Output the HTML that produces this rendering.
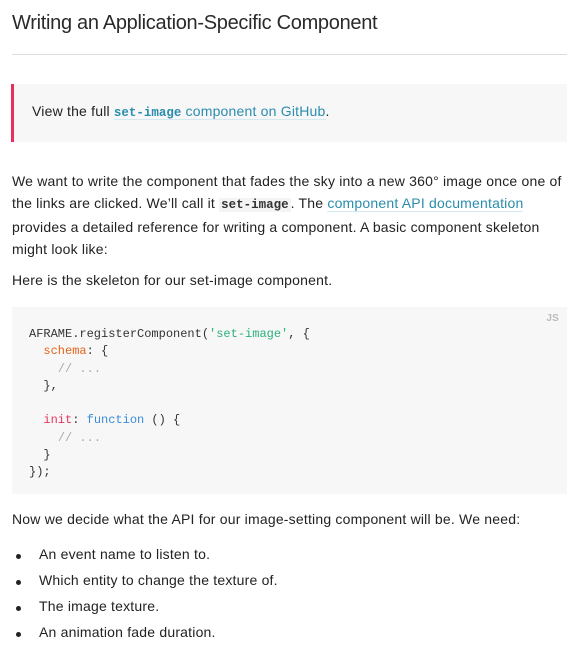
<!DOCTYPE html>
<html><head><meta charset="utf-8"><style>
body{margin:0;background:#fff;font-family:"Liberation Sans",sans-serif;color:#222;font-size:14px;width:578px;height:659px;overflow:hidden;position:relative;letter-spacing:0.2px}
.a{position:absolute;left:12px;white-space:nowrap}
h1{position:absolute;left:12px;top:12px;margin:0;font-weight:normal;font-size:20px;color:#2a2a2a;letter-spacing:-0.3px}
.hr{position:absolute;left:12px;top:54px;width:555px;height:1px;background:#ddd}
.bq{position:absolute;left:11px;top:84px;width:556px;height:58px;background:#f7f7f7;border-left:3px solid #e8305a;box-sizing:border-box}
a{color:#2a8dae;text-decoration:none;border-bottom:1px solid #d4e8ef}
code{font-family:"Liberation Mono",monospace;font-weight:bold;font-size:12.5px;letter-spacing:0}
.ic{background:#f4f4f4;color:#333;padding:0 2px}
.pre{position:absolute;left:12px;top:307px;width:555px;height:187px;background:#f7f7f7}
.pre pre{margin:0;position:absolute;left:17px;top:19px;font-family:"Liberation Mono",monospace;font-size:12px;line-height:17.3px;color:#333;letter-spacing:0}
.s{color:#2bb07a}.o{color:#e8631a}.r{color:#e83560}.b{color:#3b8bd8}.c{color:#aaa}
.js{position:absolute;right:8px;top:6px;color:#bbb;font-size:10px;font-weight:bold}
li{position:absolute;left:39px;white-space:nowrap}
li:before{content:"";position:absolute;left:-23px;top:8px;width:5px;height:5px;border-radius:50%;background:#222}
</style></head><body>
<h1>Writing an Application-Specific Component</h1>
<div class="hr"></div>
<div class="bq"><div style="position:absolute;left:18px;top:19px">View the full <a><code>set-image</code> component on GitHub</a>.</div></div>
<div class="a" style="top:170px;line-height:22px">We want to write the component that fades the sky into a new 360° image once one of<br>the links are clicked. We’ll call it <code class="ic">set-image</code>. The <a>component API documentation</a><br>provides a detailed reference for writing a component. A basic component skeleton<br>might look like:</div>
<div class="a" style="top:272px">Here is the skeleton for our set-image component.</div>
<div class="pre"><span class="js">JS</span><pre>AFRAME.registerComponent(<span class="s">'set-image'</span>, {
  <span class="o">schema</span>: {
    <span class="c">// ...</span>
  },

  <span class="r">init</span>: <span class="b">function</span> () {
    <span class="c">// ...</span>
  }
});</pre></div>
<div class="a" style="top:511px">Now we decide what the API for our image-setting component will be. We need:</div>
<ul style="margin:0;padding:0;list-style:none">
<li style="top:546px">An event name to listen to.</li>
<li style="top:572px">Which entity to change the texture of.</li>
<li style="top:598px">The image texture.</li>
<li style="top:624px">An animation fade duration.</li>
</ul>
</body></html>
